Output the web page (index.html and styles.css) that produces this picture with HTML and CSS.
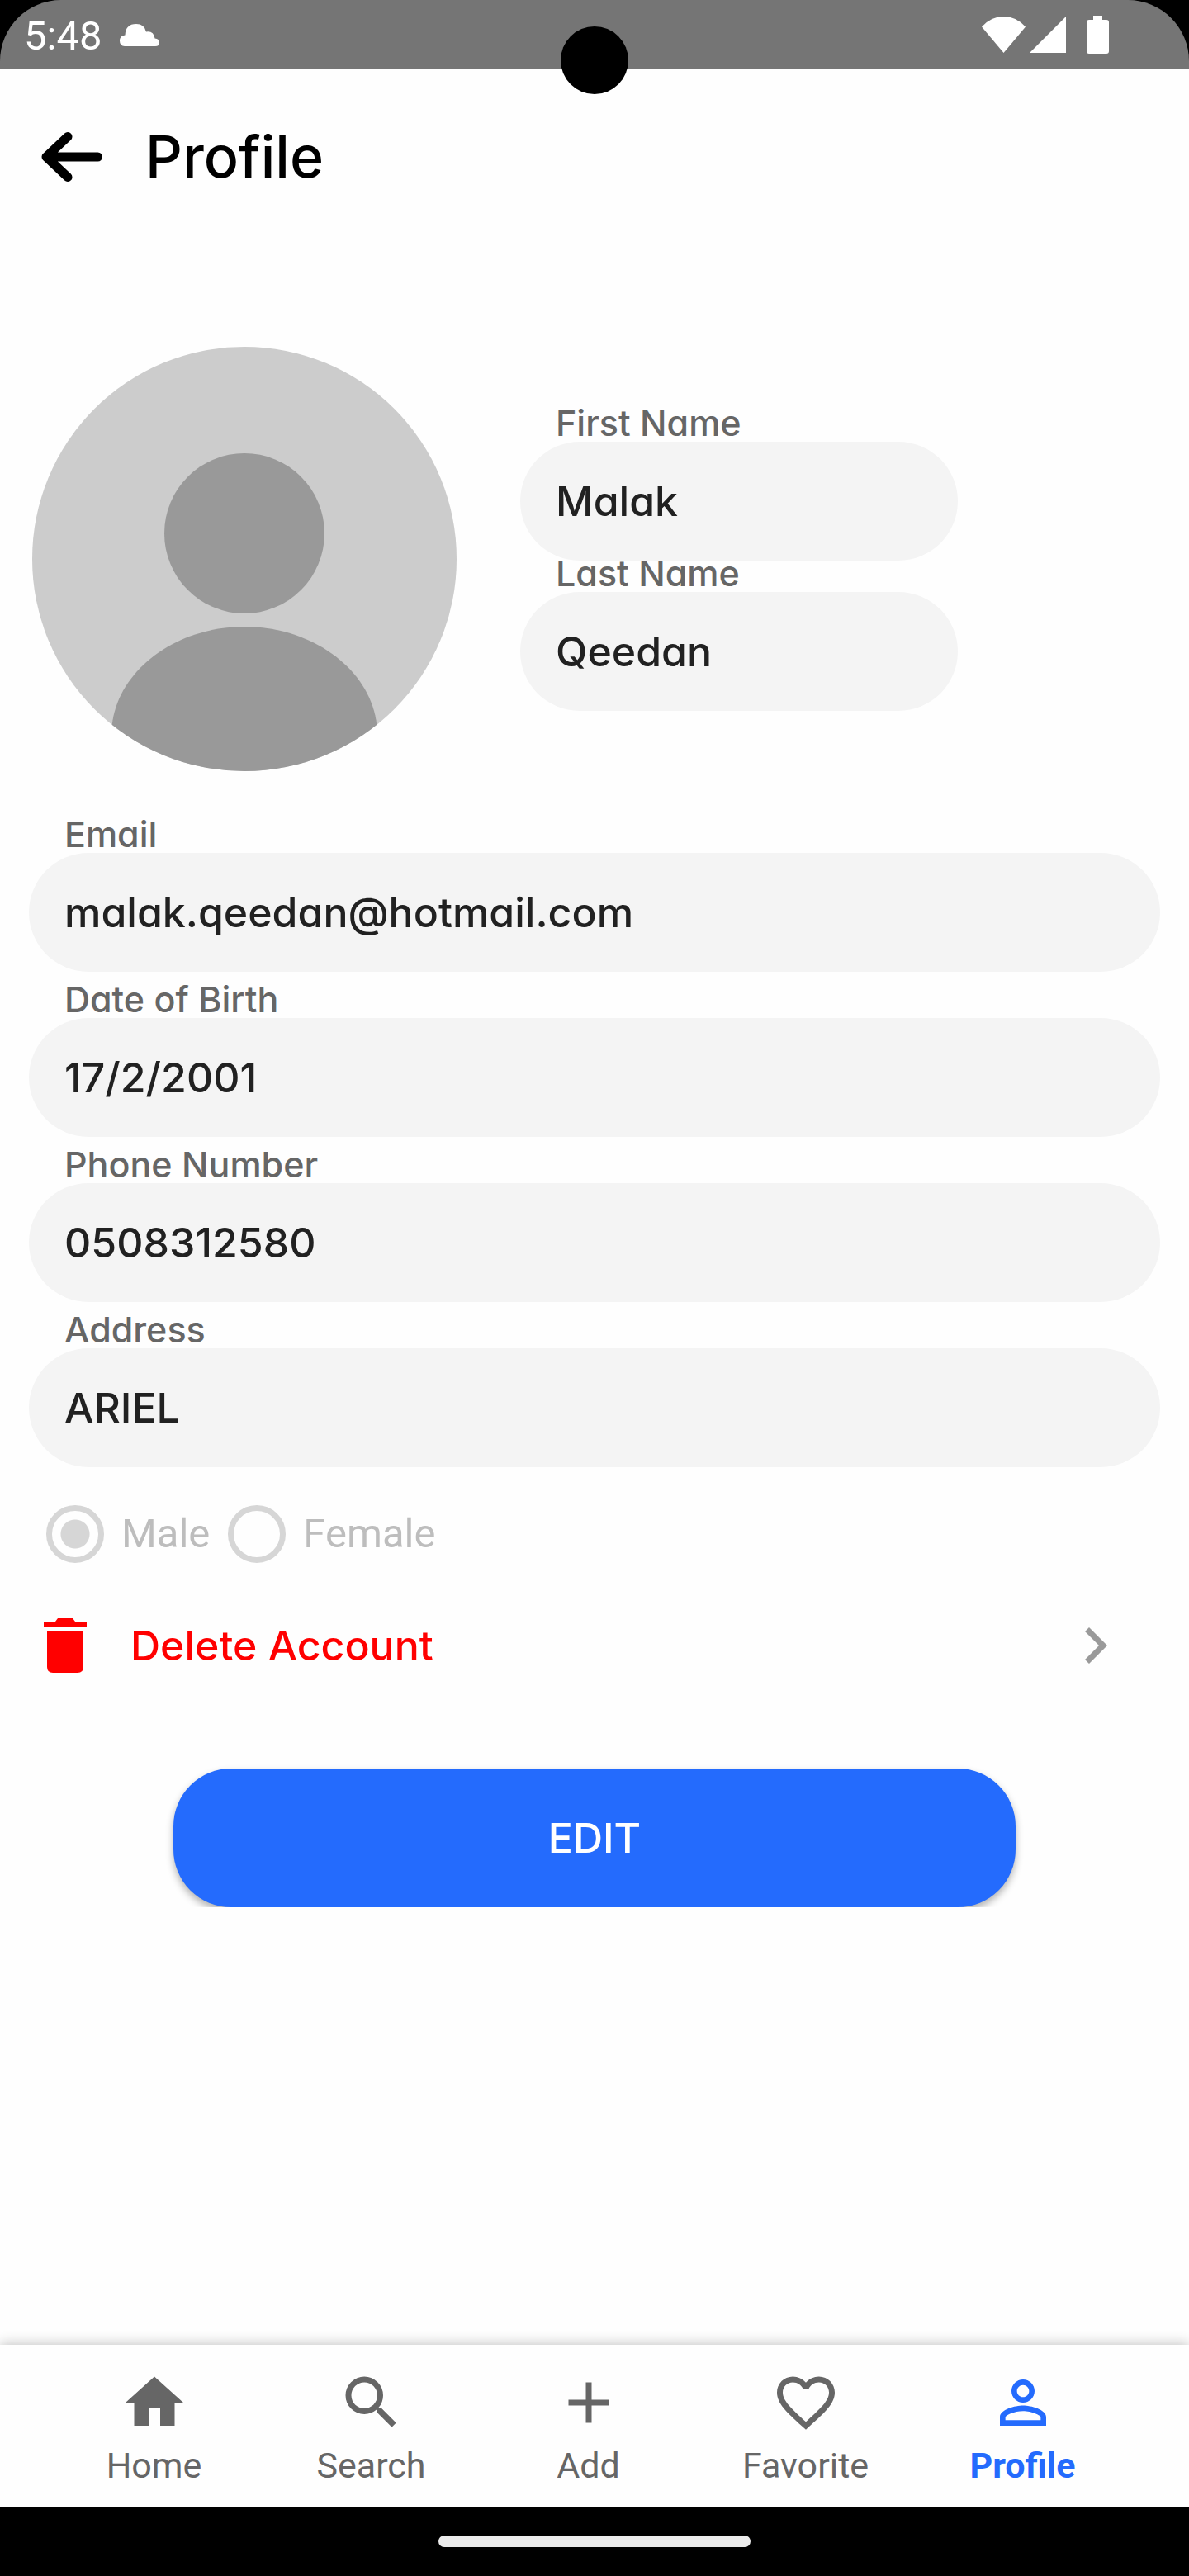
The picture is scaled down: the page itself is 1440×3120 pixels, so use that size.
FILE: index.html
```
<!DOCTYPE html>
<html lang="en">
<head>
<meta charset="utf-8">
<meta name="viewport" content="width=device-width, initial-scale=1">
<title>Profile</title>
<link rel="stylesheet" href="styles.css">
</head>
<body>
<div class="status-frame">
  <div class="status-bar">
    <div class="status-left">
      <time class="clock">5:48</time>
      <svg class="cloud" viewBox="0 0 48 27" aria-hidden="true"><path d="M6 27Q0 27 0 20.500Q0 14 6.500 13.500Q7 0 20 0Q30 0 32 9.500Q41 8 42.500 17.500Q48 18 48 22.500Q48 27 43 27Z"/></svg>
    </div>
    <div class="status-right">
      <svg class="wifi" viewBox="0 0 53 44" aria-hidden="true"><path d="M0 12.500Q11 0 26.500 0T53 12.500L26.500 44Z"/></svg>
      <svg class="signal" viewBox="0 0 44 44" aria-hidden="true"><path d="M44 0V44H0Z"/></svg>
      <svg class="battery" viewBox="0 0 27 46" aria-hidden="true"><path d="M8 0H19V5H24Q27 5 27 8V43Q27 46 24 46H3Q0 46 0 43V8Q0 5 3 5H8Z"/></svg>
    </div>
  </div>
  <span class="camera"></span>
</div>

<header class="app-header">
  <button class="back" type="button" aria-label="Back">
    <svg viewBox="0 0 74 60" aria-hidden="true"><path d="M68.500 30H6M32 5.500L6 30L32 54.500"/></svg>
  </button>
  <h1>Profile</h1>
</header>

<main>
  <form class="profile">
    <div class="identity">
      <svg class="avatar" viewBox="0 0 514 514" role="img" aria-label="Profile photo">
        <clipPath id="disc"><circle cx="257" cy="257" r="257"/></clipPath>
        <g clip-path="url(#disc)">
          <rect class="avatar-back" width="514" height="514"/>
          <circle class="avatar-figure" cx="257" cy="226" r="97"/>
          <path class="avatar-figure" d="M96 470C96 397 170 339 257 339S418 397 418 470V514H96Z"/>
        </g>
      </svg>
      <div class="names">
        <div class="field"><label for="first">First Name</label><input id="first" type="text" value="Malak" readonly></div>
        <div class="field"><label for="last">Last Name</label><input id="last" type="text" value="Qeedan" readonly></div>
      </div>
    </div>

    <div class="details">
      <div class="field"><label for="email">Email</label><input id="email" type="email" value="malak.qeedan@hotmail.com" readonly></div>
      <div class="field"><label for="birth">Date of Birth</label><input id="birth" type="text" value="17/2/2001" readonly></div>
      <div class="field"><label for="phone">Phone Number</label><input id="phone" type="tel" value="0508312580" readonly></div>
      <div class="field"><label for="address">Address</label><input id="address" type="text" value="ARIEL" readonly></div>
    </div>

    <div class="gender" role="radiogroup" aria-label="Gender">
      <label><input type="radio" name="gender" checked disabled>Male</label>
      <label><input type="radio" name="gender" disabled>Female</label>
    </div>

    <button class="delete" type="button">
      <svg class="trash" viewBox="0 0 52 66" aria-hidden="true"><path d="M0 4H14L17 0H35L38 4H52V11H0ZM4 15H48V59Q48 66 41 66H11Q4 66 4 59Z"/></svg>
      <span>Delete Account</span>
      <svg class="chevron" viewBox="0 0 27 44" aria-hidden="true"><path d="M5 0L27 22L5 44L0 39L17 22L0 5Z"/></svg>
    </button>

    <button class="edit" type="button">EDIT</button>
  </form>
</main>

<nav class="tabs">
  <a href="#home"><svg viewBox="0 0 24 24" aria-hidden="true"><path d="M10 20v-6h4v6h5v-8h3L12 3 2 12h3v8z"/></svg>Home</a>
  <a href="#search"><svg viewBox="0 0 24 24" aria-hidden="true"><path d="M15.500 14h-.79l-.28-.27A6.471 6.471 0 0 0 16 9.500 6.500 6.500 0 1 0 9.500 16c1.610 0 3.090-.59 4.230-1.570l.27.28v.79l5 4.990L20.490 19l-4.990-5zm-6 0C7.010 14 5 11.990 5 9.500S7.010 5 9.500 5 14 7.010 14 9.500 11.990 14 9.500 14z"/></svg>Search</a>
  <a href="#add"><svg viewBox="0 0 24 24" aria-hidden="true"><path d="M19 13h-6v6h-2v-6H5v-2h6V5h2v6h6z"/></svg>Add</a>
  <a href="#favorite"><svg viewBox="0 0 24 24" aria-hidden="true"><path d="M16.500 3c-1.740 0-3.410.81-4.500 2.090C10.910 3.810 9.240 3 7.500 3 4.420 3 2 5.420 2 8.500c0 3.780 3.400 6.860 8.550 11.540L12 21.350l1.450-1.320C18.600 15.360 22 12.280 22 8.500 22 5.420 19.580 3 16.500 3zm-4.400 15.550l-.1.100-.1-.1C7.140 14.240 4 11.390 4 8.500 4 6.500 5.500 5 7.500 5c1.540 0 3.040.99 3.570 2.360h1.870C13.460 5.990 14.960 5 16.500 5c2 0 3.500 1.500 3.500 3.500 0 2.890-3.140 5.740-7.900 10.050z"/></svg>Favorite</a>
  <a class="active" href="#profile" aria-current="page"><svg viewBox="0 0 24 24" aria-hidden="true"><path d="M12 5.900c1.160 0 2.100.94 2.100 2.100s-.94 2.100-2.100 2.100S9.900 9.160 9.900 8s.94-2.100 2.100-2.100m0 9c2.970 0 6.100 1.460 6.100 2.100v1.100H5.900V17c0-.64 3.130-2.100 6.100-2.100M12 4C9.790 4 8 5.790 8 8s1.790 4 4 4 4-1.790 4-4-1.790-4-4-4zm0 9c-2.670 0-8 1.340-8 4v3h16v-3c0-2.660-5.330-4-8-4z"/></svg>Profile</a>
</nav>
<div class="system-bar"><span class="home-pill"></span></div>
</body>
</html>
```
FILE: styles.css
```
* { box-sizing: border-box; }

body {
  margin: 0;
  min-height: 100vh;
  display: flex;
  flex-direction: column;
  background: #fefefe;
  color: #212121;
  font-family: Inter, "Liberation Sans", sans-serif;
  font-feature-settings: "cv11";
  font-weight: 500;
}

svg { display: block; flex: none; fill: currentColor; }
button, input { font: inherit; font-feature-settings: inherit; color: inherit; border: 0; margin: 0; }
button { background: none; padding: 0; cursor: pointer; }

/* Status bar */
.status-frame { position: relative; background: #000; }
.status-bar {
  height: 84px;
  padding: 0 97px 0 29px;
  display: flex;
  justify-content: space-between;
  align-items: center;
  border-radius: 74px 74px 0 0;
  background: #757575;
  color: #fff;
}
.status-left, .status-right { display: flex; align-items: center; }
.status-left { gap: 22px; }
.clock { font: 400 49px/56px Roboto, sans-serif; padding-top: 4px; }
.cloud { width: 48px; height: 27px; }
.wifi { width: 53px; height: 44px; }
.signal { width: 44px; height: 44px; margin: 0 25px 0 5px; }
.battery { width: 27px; height: 46px; }
.camera {
  position: absolute;
  top: 32px;
  left: 50%;
  width: 82px;
  height: 82px;
  margin-left: -41px;
  border-radius: 50%;
  background: #000;
}

/* Header */
.app-header {
  height: 212px;
  padding: 0 50px;
  display: flex;
  align-items: center;
  gap: 52px;
  color: #000;
}
.back svg { width: 74px; height: 60px; fill: none; stroke: #000; stroke-width: 11; stroke-linecap: round; stroke-linejoin: round; }
.app-header h1 { margin: 0; font-size: 70px; line-height: 84px; font-weight: 500; }

/* Form */
main { flex: 1; padding: 124px 35px 0; }
.profile { display: flex; flex-direction: column; }
.identity { display: flex; align-items: center; gap: 77px; padding-left: 4px; }
.avatar { width: 514px; height: 514px; }
.avatar-back { fill: #ccc; }
.avatar-figure { fill: #999; }
.names { width: 530px; padding-top: 4px; display: grid; }
.field { display: flex; flex-direction: column; gap: 8px; }
.field label { padding-left: 43px; font-size: 43px; line-height: 30px; color: #666; }
.field input {
  width: 100%;
  height: 144px;
  padding: 0 43px;
  border-radius: 72px;
  background: #f4f4f4;
  font-size: 50px;
}
.details { display: grid; gap: 18px; margin-top: 61px; }

.gender { display: flex; gap: 22px; margin: 46px 21px 0; }
.gender label {
  display: flex;
  align-items: center;
  gap: 21px;
  font: 400 49px/70px Roboto, sans-serif;
  color: #bdbdbd;
}
.gender input {
  appearance: none;
  width: 70px;
  height: 70px;
  border: 7px solid #d6d6d6;
  border-radius: 50%;
}
.gender input:checked { background: radial-gradient(circle, #d6d6d6 17px, transparent 18px); }

.delete {
  display: flex;
  align-items: center;
  margin: 58px 0 0;
  padding: 0 64px 0 18px;
  height: 84px;
  gap: 53px;
  font-size: 50px;
  color: #f00;
}
.trash { width: 52px; height: 66px; }
.chevron { width: 27px; height: 44px; margin-left: auto; fill: #9a9a9a; }

.edit {
  height: 168px;
  margin: 107px 175px 0;
  border-radius: 70px;
  background: #246bfd;
  box-shadow: 0 5px 10px rgba(0, 0, 0, .3);
  clip-path: inset(-10px -10px 0);
  color: #fff;
  font-size: 50px;
}

/* Bottom navigation */
.tabs {
  display: flex;
  height: 196px;
  padding: 0 70px 0 55px;
  background: #fefefe;
  box-shadow: 0 -2px 14px rgba(0, 0, 0, .22);
}
.tabs a {
  flex: 1;
  display: flex;
  flex-direction: column;
  align-items: center;
  gap: 9px;
  padding-top: 28px;
  font: 400 43px/50px Roboto, sans-serif;
  color: #666;
  text-decoration: none;
}
.tabs svg { width: 84px; height: 84px; }
.tabs .active { color: #246bfd; font-weight: 700; }

.system-bar { height: 84px; display: flex; align-items: center; justify-content: center; background: #000; }
.home-pill { width: 378px; height: 14px; border-radius: 7px; background: #ebebeb; }
```
